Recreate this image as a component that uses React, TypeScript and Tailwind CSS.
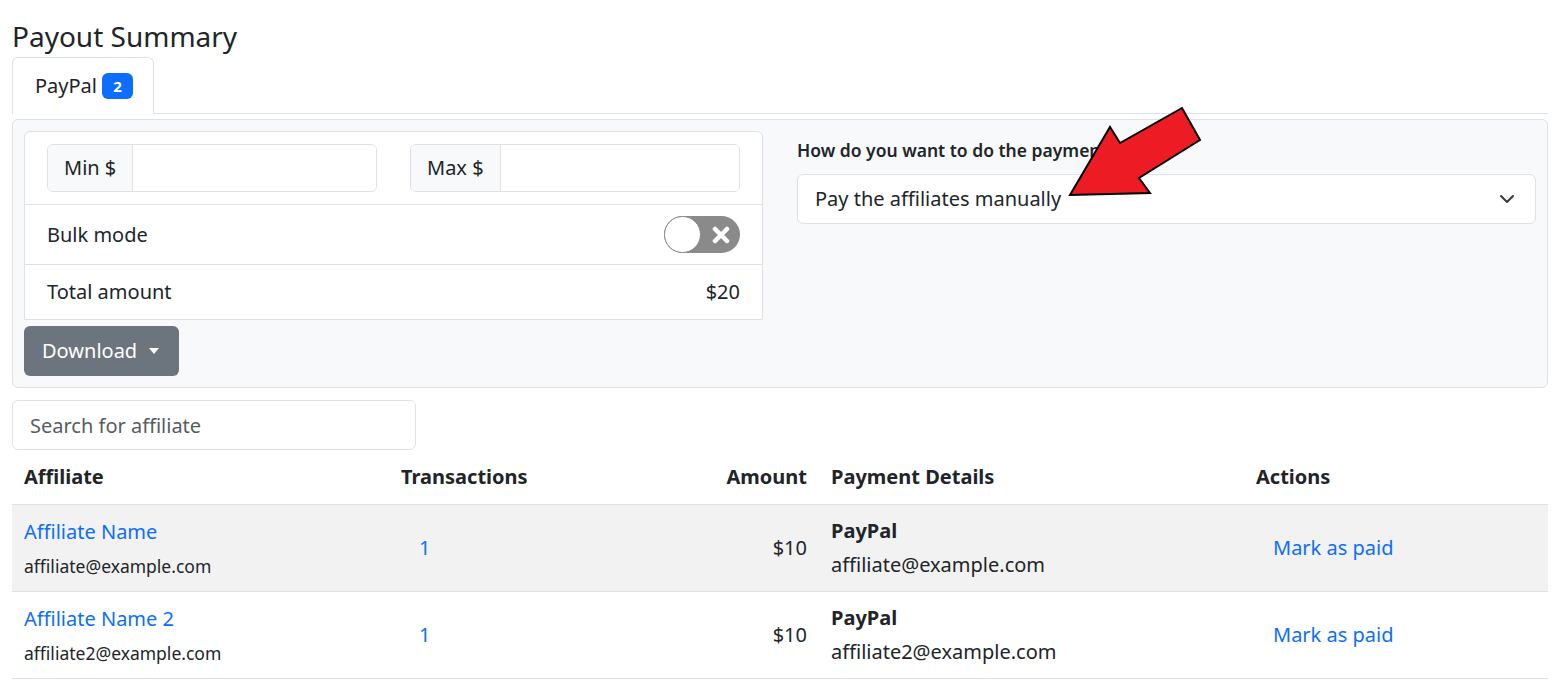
import React from "react";

const payouts = [
  { name: "Affiliate Name", email: "affiliate@example.com", transactions: 1, amount: "$10" },
  { name: "Affiliate Name 2", email: "affiliate2@example.com", transactions: 1, amount: "$10" },
];

function RedArrow() {
  // annotation drawn over the screenshot
  return (
    <svg
      className="pointer-events-none absolute left-[1060px] top-[100px]"
      width="150"
      height="105"
      viewBox="1060 100 150 105"
    >
      <polygon
        points="1070,195 1110,127 1120,143 1182,108 1200,140 1139,178 1150,193"
        fill="#ed1c24"
        stroke="#000"
        strokeWidth="2"
      />
    </svg>
  );
}

function Toggle() {
  return (
    <div className="flex h-[37px] w-[76px] items-center rounded-full bg-[#8a8a8a]">
      <div className="h-[37px] w-[37px] rounded-full border border-[#8a8a8a] bg-white" />
      <div className="flex flex-1 items-center justify-center">
        <svg width="18" height="18" viewBox="0 0 18 18">
          <path d="M3 3l12 12M15 3L3 15" stroke="#fff" strokeWidth="4.5" strokeLinecap="round" />
        </svg>
      </div>
    </div>
  );
}

function AddonInput({ label }: { label: string }) {
  return (
    <div className="flex h-[48px] overflow-hidden rounded-md border border-[#dee2e6]">
      <span className="flex items-center border-r border-[#dee2e6] bg-[#f8f9fa] px-4">{label}</span>
      <input className="min-w-0 flex-1 bg-white px-4 outline-none" />
    </div>
  );
}

export default function App() {
  return (
    <div
      className="relative bg-white pb-6 pl-3 pr-[14px] text-[20px] text-[#212529]"
      style={{ fontFamily: '"Noto Sans", "Open Sans", sans-serif' }}
    >
      <h3 className="pt-[19px] text-[28px] leading-[34px]">Payout Summary</h3>

      <div className="mt-[4px] flex border-b border-[#dee2e6]">
        <div className="-mb-px flex h-[57px] items-center gap-[5px] rounded-t-md border border-b-0 border-[#dee2e6] bg-white pl-[22px] pr-[20px]">
          <span>PayPal</span>
          <span className="flex h-[26px] w-[31px] items-center justify-center rounded-md bg-[#0d6efd] text-[15px] font-bold text-white">
            2
          </span>
        </div>
      </div>

      <div className="mt-[5px] rounded-md border border-[#dee2e6] bg-[#f8f9fa] p-[11px]">
        <div className="grid grid-cols-2 gap-[34px]">
          <div>
            <div className="rounded-t-md border border-[#dee2e6] bg-white">
              <div className="grid grid-cols-2 gap-[33px] border-b border-[#dee2e6] px-[22px] py-3">
                <AddonInput label="Min $" />
                <AddonInput label="Max $" />
              </div>
              <div className="flex items-center justify-between border-b border-[#dee2e6] px-[22px] py-[11px]">
                <span>Bulk mode</span>
                <Toggle />
              </div>
              <div className="flex items-center justify-between px-[22px] py-3 leading-[30px]">
                <span>Total amount</span>
                <span>$20</span>
              </div>
            </div>
            <button className="mt-[6px] flex h-[50px] items-center gap-[11px] rounded-md bg-[#6c757d] pl-[18px] pr-[19px] text-white">
              Download
              <svg width="12" height="8" viewBox="0 0 12 8">
                <polygon points="1,1 11,1 6,7" fill="#fff" />
              </svg>
            </button>
          </div>

          <div className="pt-[6px]">
            <label className="block text-[17.5px] font-semibold leading-[26px]">How do you want to do the payment?</label>
            <div className="mt-[11px] flex h-[50px] items-center justify-between rounded-md border border-[#dee2e6] bg-white pl-[17px] pr-[20px]">
              <span>Pay the affiliates manually</span>
              <svg width="16" height="16" viewBox="0 0 16 16">
                <path d="M2 5l6 6 6-6" fill="none" stroke="#343a40" strokeWidth="2" strokeLinecap="round" strokeLinejoin="round" />
              </svg>
            </div>
          </div>
        </div>
      </div>

      <input
        className="mt-[12px] h-[50px] w-[404px] rounded-md border border-[#dee2e6] px-[17px] outline-none placeholder:text-[#595c5f]"
        placeholder="Search for affiliate"
      />

      <table className="w-full table-fixed border-collapse">
        <colgroup>
          <col className="w-[377px]" />
          <col className="w-[310px]" />
          <col className="w-[120px]" />
          <col className="w-[425px]" />
          <col />
        </colgroup>
        <thead>
          <tr className="border-b border-[#dee2e6] text-left font-bold">
            <th className="px-3 py-3 leading-[30px]">Affiliate</th>
            <th className="px-3 py-3 leading-[30px]">Transactions</th>
            <th className="px-3 py-3 text-right leading-[30px]">Amount</th>
            <th className="px-3 py-3 leading-[30px]">Payment Details</th>
            <th className="px-3 py-3 leading-[30px]">Actions</th>
          </tr>
        </thead>
        <tbody>
          {payouts.map((p, i) => (
            <tr key={p.email} className={`border-b border-[#dee2e6] ${i % 2 === 0 ? "bg-[#f2f2f2]" : "bg-white"}`}>
              <td className="h-[87px] px-3 align-middle">
                <a className="block leading-[30px] text-[#0d6efd]">{p.name}</a>
                <div className="mt-[6px] text-[17.5px] leading-[26px]">{p.email}</div>
              </td>
              <td className="px-3 align-middle">
                <a className="inline-block px-[18px] leading-[30px] text-[#0d6efd]">{p.transactions}</a>
              </td>
              <td className="px-3 text-right align-middle">{p.amount}</td>
              <td className="px-3 align-middle">
                <div className="font-bold leading-[30px]">PayPal</div>
                <div className="mt-[4px] leading-[30px]">{p.email}</div>
              </td>
              <td className="px-3 align-middle">
                <a className="inline-block px-[17px] leading-[30px] text-[#0d6efd]">Mark as paid</a>
              </td>
            </tr>
          ))}
        </tbody>
      </table>

      <RedArrow />
    </div>
  );
}
